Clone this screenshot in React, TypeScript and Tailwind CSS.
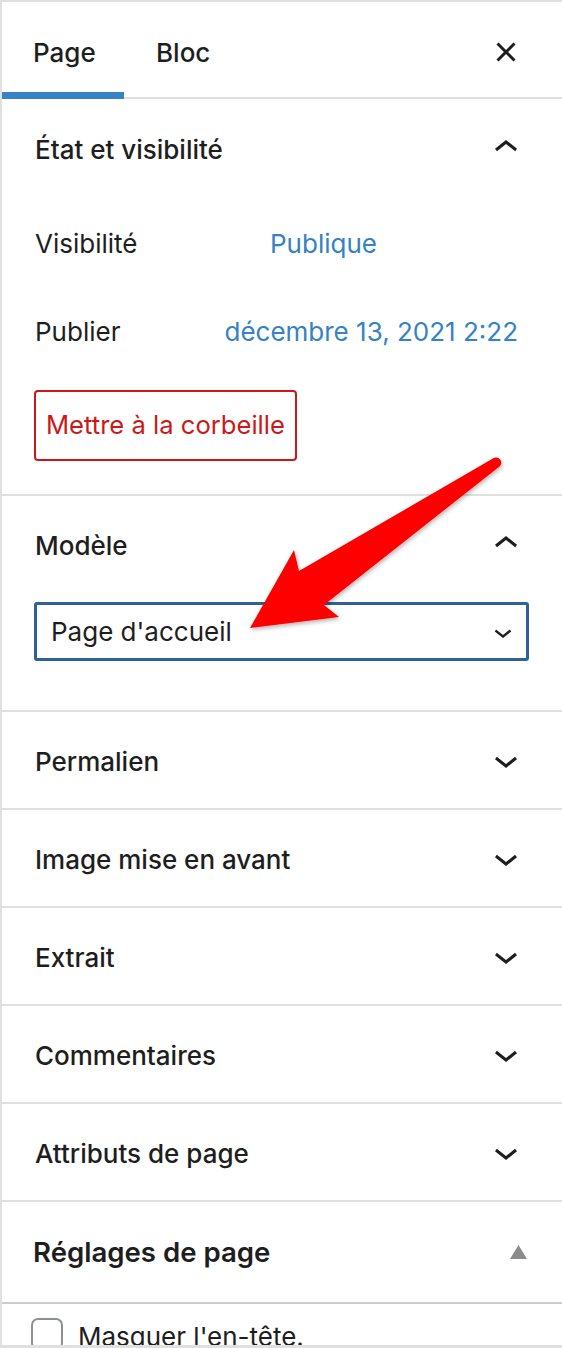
import React from "react";

const ChevronUp = ({ size = 48 }: { size?: number }) => (
  <svg width={size} height={size} viewBox="0 0 24 24" fill="#1e1e1e">
    <path d="M6.5 12.4L12 8l5.5 4.4-.9 1.2L12 10l-4.5 3.6-1-1.2z" />
  </svg>
);

const ChevronDown = ({ size = 48 }: { size?: number }) => (
  <svg width={size} height={size} viewBox="0 0 24 24" fill="#1e1e1e">
    <path d="M17.5 11.6L12 16l-5.5-4.4.9-1.2L12 14l4.5-3.6 1 1.2z" />
  </svg>
);

const CloseSmall = () => (
  <svg width={48} height={48} viewBox="0 0 24 24" fill="#1e1e1e">
    <path d="M12 13.06l3.712 3.713 1.061-1.06L13.061 12l3.712-3.712-1.06-1.06L12 10.938 8.288 7.227l-1.061 1.06L10.939 12l-3.712 3.712 1.06 1.061L12 13.061z" />
  </svg>
);

const CollapsedRow = ({ title }: { title: string }) => (
  <div className="flex h-[96px] items-center justify-between border-b-2 border-[#e0e0e0] pl-[33px] pr-[32px] box-content">
    <span className="pt-[2px] text-[26px] font-medium text-[#1e1e1e]">{title}</span>
    <ChevronDown />
  </div>
);

export default function App() {
  return (
    <div
      className="relative h-[1348px] w-[562px] overflow-hidden border-b-[3px] border-l-2 border-t-2 border-[#e0e0e0] bg-white text-[#1e1e1e]"
      style={{ fontFamily: "Inter, 'Noto Sans', sans-serif" }}
    >
      {/* Tabs */}
      <div className="flex h-[97px] items-center border-b-2 border-[#e0e0e0] pt-[5px] box-border">
        <div className="relative flex h-full w-[122px] items-center pl-[31px] text-[26px] font-medium">
          Page
          <span className="absolute bottom-[-2px] left-0 right-0 h-[7px] bg-[#3582c4]" />
        </div>
        <div className="flex h-full items-center pl-[32px] text-[26px] font-medium">Bloc</div>
        <div className="ml-auto mr-[32px] flex items-center">
          <CloseSmall />
        </div>
      </div>

      {/* État et visibilité */}
      <div className="border-b-2 border-[#e0e0e0] pb-[33px]">
        <div className="flex h-[98px] items-center justify-between pl-[33px] pr-[32px]">
          <span className="pt-[2px] text-[26px] font-medium">État et visibilité</span>
          <ChevronUp />
        </div>
        <div className="mt-[14px] flex h-[64px] items-center pl-[33px] pr-[32px] text-[26px]">
          <span className="w-[235px]">Visibilité</span>
          <span className="text-[#3582c4]">Publique</span>
        </div>
        <div className="mt-[24px] flex h-[64px] items-center justify-between pl-[33px] pr-[44px] text-[26px]">
          <span>Publier</span>
          <span className="text-[#3582c4]">décembre 13, 2021 2:22</span>
        </div>
        <div className="mt-[27px] pl-[32px]">
          <div className="inline-flex h-[71px] items-center rounded-[4px] border-2 border-[#cc1818] px-[10px] text-[25.6px] text-[#cc1818]">
            Mettre à la corbeille
          </div>
        </div>
      </div>

      {/* Modèle */}
      <div className="border-b-2 border-[#e0e0e0] pb-[49px]">
        <div className="flex h-[96px] items-center justify-between pl-[33px] pr-[32px]">
          <span className="pt-[2px] text-[26px] font-medium">Modèle</span>
          <ChevronUp />
        </div>
        <div className="ml-[32px] mt-[10px] flex h-[59px] w-[495px] items-center justify-between rounded-[3px] border-[3px] border-[#2d6197] pl-[14px] pr-[5px] text-[26px]">
          <span>Page d'accueil</span>
          <ChevronDown size={36} />
        </div>
      </div>

      <CollapsedRow title="Permalien" />
      <CollapsedRow title="Image mise en avant" />
      <CollapsedRow title="Extrait" />
      <CollapsedRow title="Commentaires" />
      <CollapsedRow title="Attributs de page" />

      {/* Réglages de page */}
      <div className="flex h-[100px] items-center justify-between border-b-2 border-[#cccccc] pl-[31px] pr-[35px] box-content">
        <span className="pt-[2px] text-[27.6px] font-semibold">Réglages de page</span>
        <svg width="17" height="14" viewBox="0 0 17 14">
          <polygon points="8.5,0 17,14 0,14" fill="#8c8c8c" />
        </svg>
      </div>

      <div className="flex items-start gap-[15px] pl-[29px] pt-[14px]">
        <div className="h-[32px] w-[32px] shrink-0 rounded-[7px] border-2 border-[#8c8f94]" />
        <span className="mt-[3px] text-[26px] leading-[32px]">Masquer l'en-tête.</span>
      </div>

      {/* Red annotation arrow */}
      <svg
        className="pointer-events-none absolute left-[-2px] top-[-2px]"
        width="562"
        height="1348"
        viewBox="0 0 562 1348"
      >
        <defs>
          <filter id="sh" x="-20%" y="-20%" width="140%" height="140%">
            <feDropShadow dx="1" dy="2" stdDeviation="2" floodColor="#000" floodOpacity="0.3" />
          </filter>
        </defs>
        <path
          d="M494.2 457.8 L299 571 L294 550 L250 628 L339 617 L324 605 L499.8 466.2 A5.2 5.2 0 0 0 494.2 457.8 Z"
          fill="#ff0000"
          filter="url(#sh)"
        />
      </svg>
    </div>
  );
}
